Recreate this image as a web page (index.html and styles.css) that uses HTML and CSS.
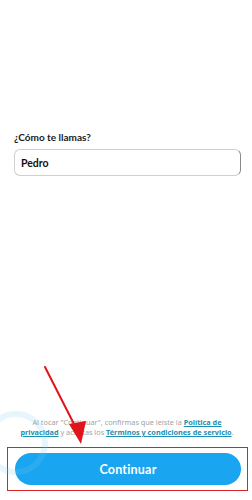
FILE: index.html
```html
<!DOCTYPE html>
<html lang="es">
<head>
<meta charset="utf-8">
<link rel="stylesheet" href="styles.css">
</head>
<body>
<div class="page">
  <div class="form">
    <label class="label" for="name">¿Cómo te llamas?</label>
    <div class="input">Pedro</div>
  </div>
  <div class="spacer"></div>
  <p class="legal">Al tocar "Continuar", confirmas que leíste la <a>Política de privacidad</a> y aceptas los <a>Términos y condiciones de servicio</a>.</p>
  <div class="highlight">
    <button class="btn">Continuar</button>
  </div>
  <div class="home"></div>
  <div class="ring"></div>
  <svg class="arrow" width="252" height="500" viewBox="0 0 252 500">
    <line x1="45" y1="367" x2="76" y2="428" stroke="#e0141b" stroke-width="2" stroke-linecap="round"/>
    <polygon points="69,424 86,421 81,444" fill="#e0141b"/>
  </svg>
</div>
</body>
</html>
```
FILE: styles.css
```css
* { box-sizing: border-box; }
html, body { margin: 0; padding: 0; background: #fff; }
body { font-family: Lato, "Noto Sans", sans-serif; }
.page {
  position: relative;
  width: 252px;
  height: 500px;
  display: flex;
  flex-direction: column;
  overflow: hidden;
}
.form {
  padding: 131px 11px 0 14px;
  display: flex;
  flex-direction: column;
  gap: 5px;
}
.label {
  font-size: 10px;
  font-weight: 700;
  color: #1a1a1a;
  line-height: 13px;
}
.input {
  height: 27px;
  border: 1px solid #cfcfcf;
  border-right-color: #8a8a8a;
  border-radius: 6px;
  padding: 0 6px;
  font-size: 10.5px;
  font-weight: 700;
  color: #111;
  display: flex;
  align-items: center;
}
.spacer { flex: 1; }
.legal {
  margin: 0 14px 10px 16px;
  font-family: "Noto Sans", sans-serif;
  font-size: 7.3px;
  line-height: 10px;
  text-align: center;
  color: #a3a3a3;
}
.legal a {
  color: #1d8fb3;
  font-weight: 700;
  text-decoration: underline;
}
.highlight {
  margin: 0 4px 0 7px;
  border: 1.5px solid #d9232a;
  height: 44px;
  padding: 5px 6px 5px 7px;
  display: flex;
}
.btn {
  flex: 1;
  border: none;
  border-radius: 16px;
  background: #1aa5f1;
  color: #fff;
  font-family: Lato, "Noto Sans", sans-serif;
  font-size: 12.5px;
  font-weight: 700;
  letter-spacing: 0.2px;
  padding: 0;
}
.home {
  height: 9px;
}
.ring {
  position: absolute;
  left: -16px;
  top: 411px;
  width: 64px;
  height: 64px;
  border-radius: 50%;
  border: 6px solid rgba(120, 200, 240, 0.18);
  pointer-events: none;
}
.arrow {
  position: absolute;
  left: 0;
  top: 0;
  pointer-events: none;
}
```
